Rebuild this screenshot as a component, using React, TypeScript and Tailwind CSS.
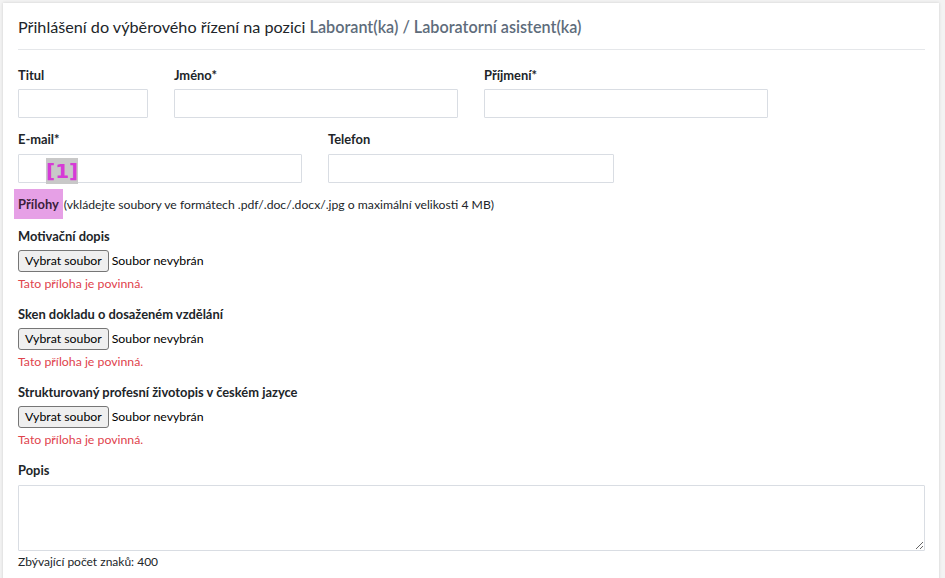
import React, { useState } from 'react';

const labelStyle = "block text-[12.9px] font-bold text-[#212529] mb-[5px] leading-[18px]";
const inputStyle = "h-[29px] bg-white border border-[#d9dde3] rounded-[1px] px-2 text-[13px] focus:outline-none";

const Field: React.FC<{ label: string; width: string }> = ({ label, width }) => (
    <div className={width}>
        <label className={labelStyle}>{label}</label>
        <input type="text" className={`${inputStyle} w-full`} />
    </div>
);

const Attachment: React.FC<{ label: string }> = ({ label }) => (
    <div className="mb-[13px]">
        <label className={labelStyle}>{label}</label>
        <div className="flex items-center gap-[3px]">
            <button className="h-[22px] px-[6px] bg-[#efefef] border border-[#767676] rounded-[3px] text-[12.3px] text-black leading-none">
                Vybrat soubor
            </button>
            <span className="text-[12.3px] text-black">Soubor nevybrán</span>
        </div>
        <p className="text-[12.3px] text-[#e0434c] mt-[4px] leading-[16px]">Tato příloha je povinná.</p>
    </div>
);

export default function App() {
    const [popis, setPopis] = useState('');

    return (
        <div className="w-[945px] h-[578px] overflow-hidden bg-[#f3f3f3] font-['Lato',sans-serif]">
            <div className="ml-[3px] mt-[3px] w-[936px] h-[600px] bg-white shadow-[0_0_3px_rgba(0,0,0,0.15)] px-[15px]">
                <h1 className="pt-[13px] pb-[11px] text-[16.2px] leading-[22px] text-[#212529] border-b border-[#e5e7ea] mr-[-1px]">
                    Přihlášení do výběrového řízení na pozici{' '}
                    <span className="text-[#5e6c7b] font-semibold">Laborant(ka) / Laboratorní asistent(ka)</span>
                </h1>

                <form className="pt-[16px]" onSubmit={e => e.preventDefault()}>
                    <div className="flex gap-[26px] mb-[12px]">
                        <Field label="Titul" width="w-[130px]" />
                        <Field label="Jméno*" width="w-[284px]" />
                        <Field label="Příjmení*" width="w-[284px]" />
                    </div>
                    <div className="flex gap-[26px] mb-[6px]">
                        <div className="w-[284px] relative">
                            <label className={`${labelStyle} mb-[6px]`}>E-mail*</label>
                            <input type="email" className={`${inputStyle} w-full`} />
                            <span className="absolute left-[28px] top-[28px] bg-[#c8c8c8] text-[#d63ad6] font-bold text-[20px] leading-[26px] font-['DejaVu_Sans',sans-serif]">
                                [1]
                            </span>
                        </div>
                        <div className="w-[286px]">
                            <label className={`${labelStyle} mb-[6px]`}>Telefon</label>
                            <input type="text" className={`${inputStyle} w-full`} />
                        </div>
                    </div>

                    <p className="text-[12.2px] text-[#212529] mb-[7px] leading-[30px]">
                        <span className="inline-block bg-[#e6a0e6] font-bold text-[#3c1e3c] ml-[-4px] px-[4px] mr-[1px] text-[12.9px]">Přílohy</span>
                        (vkládejte soubory ve formátech .pdf/.doc/.docx/.jpg o maximální velikosti 4 MB)
                    </p>

                    <Attachment label="Motivační dopis" />
                    <Attachment label="Sken dokladu o dosaženém vzdělání" />
                    <Attachment label="Strukturovaný profesní životopis v českém jazyce" />

                    <div>
                        <label className={`${labelStyle} mb-[6px]`}>Popis</label>
                        <textarea
                            value={popis}
                            onChange={e => setPopis(e.target.value.slice(0, 400))}
                            className="block w-[907px] h-[66px] border border-[#d9dde3] rounded-[1px] p-2 text-[13px] focus:outline-none"
                        />
                        <p className="text-[12px] text-[#212529] mt-[3px] leading-[16px]">Zbývající počet znaků: {400 - popis.length}</p>
                    </div>
                </form>
            </div>
        </div>
    );
}
